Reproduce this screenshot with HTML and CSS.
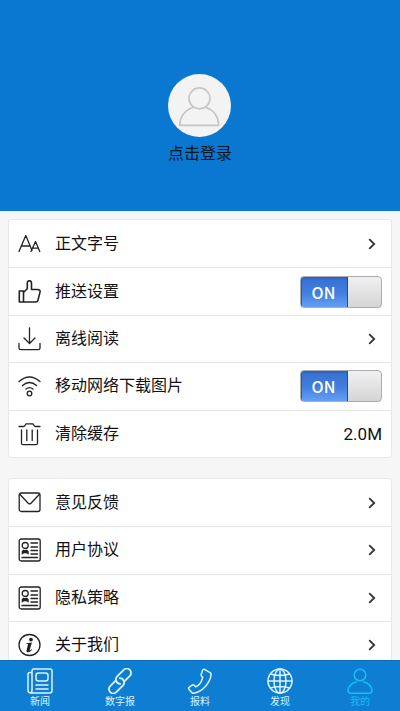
FILE: index.html
```html
<!DOCTYPE html>
<html lang="zh-CN">
<head>
<meta charset="utf-8">
<meta name="viewport" content="width=device-width, initial-scale=1">
<title>我的</title>
<link rel="stylesheet" href="styles.css">
</head>
<body>
<svg class="defs" aria-hidden="true">
  <symbol id="chevron" viewBox="0 0 8 12"><path d="M1.200 1.200 6.200 6 1.200 10.800"/></symbol>
  <symbol id="document" viewBox="0 0 24 24">
    <rect x="1.200" y="1" width="21" height="22" rx="2"/>
    <circle cx="7.200" cy="7.500" r="3"/>
    <path d="M13 5h6.500M13 9h6.500M13 12.500h6.500M13 16h6.500M4 19.500h15.500"/>
    <path class="solid dot" d="M3.700 16.800v-3.600l1.800-1.700q1.700 1 3.400 0l1.800 1.700v3.600l-2.300-1.500h-2.400z"/>
  </symbol>
</svg>

<main class="content">
  <header class="profile">
    <a class="login" href="#login">
      <svg class="avatar" viewBox="0 0 62 62" aria-hidden="true">
        <circle class="avatar-bg" cx="31" cy="31" r="31"/>
        <circle cx="31" cy="24" r="10.300"/>
        <path d="M25 32.800C17 35.500 12 42 11.500 50.500h38.500C49.500 42 45 35.500 37 32.800"/>
      </svg>
      <span>点击登录</span>
    </a>
  </header>

  <div class="cards">
    <section class="card card-settings">
      <a class="row" href="#font">
        <svg class="icon" viewBox="0 0 24 24" aria-hidden="true"><path d="M1 19.500 7.800 3.500 14 18.500M3.600 14h8.400M13 19.500l4.500-10 4.300 10M14.500 16.200h5.800"/></svg>
        <span class="label">正文字号</span>
        <svg class="chevron" aria-hidden="true"><use href="#chevron"/></svg>
      </a>
      <div class="row">
        <svg class="icon icon-bold" viewBox="0 0 24 24" aria-hidden="true"><path d="M1.300 11h4.200v11H1.300zM5.500 12.500l3.800-3.700V3c0-3 4.200-3 4.200.2v6.300h6.200c1.900 0 2.700 1 2.300 2.600l-2 8c-.3 1.300-1 1.900-2.200 1.900H5.500"/></svg>
        <label class="label" for="push">推送设置</label>
        <span class="switch"><input type="checkbox" id="push" checked><span class="switch-text" aria-hidden="true">ON</span></span>
      </div>
      <a class="row" href="#offline">
        <svg class="icon" viewBox="0 0 24 24" aria-hidden="true"><path d="M11.500 1v15M6 11l5.500 5.500L17 11M1 16.500V21q0 1.700 1.700 1.700h17.600q1.700 0 1.700-1.700v-4.500"/></svg>
        <span class="label">离线阅读</span>
        <svg class="chevron" aria-hidden="true"><use href="#chevron"/></svg>
      </a>
      <div class="row">
        <svg class="icon" viewBox="0 0 24 24" aria-hidden="true"><path d="M1 7.500q10.500-9 21 0M4.500 11.500q7-6 14 0M8 15q3.500-2.800 7 0"/><circle cx="11.500" cy="19.500" r="2.300"/></svg>
        <label class="label" for="images">移动网络下载图片</label>
        <span class="switch"><input type="checkbox" id="images" checked><span class="switch-text" aria-hidden="true">ON</span></span>
      </div>
      <a class="row" href="#cache">
        <svg class="icon" viewBox="0 0 24 24" aria-hidden="true"><path d="M1 4.500h4.500q1 0 1.500-1l1-1.700h7l1 1.700q.5 1 1.500 1H22M3.500 8v13.200q0 1.500 1.500 1.500h13q1.500 0 1.500-1.500V8M8.800 8v10.500M14.200 8v10.500"/></svg>
        <span class="label">清除缓存</span>
        <span class="value">2.0M</span>
      </a>
    </section>

    <section class="card card-about">
      <a class="row" href="#feedback">
        <svg class="icon" viewBox="0 0 24 24" aria-hidden="true"><rect x="1.200" y="2" width="20.800" height="18.500" rx="2"/><path d="M2 3.500l8.200 8.700q1.400 1.300 2.800 0L21.200 3.500"/></svg>
        <span class="label">意见反馈</span>
        <svg class="chevron" aria-hidden="true"><use href="#chevron"/></svg>
      </a>
      <a class="row" href="#agreement">
        <svg class="icon" aria-hidden="true"><use href="#document"/></svg>
        <span class="label">用户协议</span>
        <svg class="chevron" aria-hidden="true"><use href="#chevron"/></svg>
      </a>
      <a class="row" href="#privacy">
        <svg class="icon" aria-hidden="true"><use href="#document"/></svg>
        <span class="label">隐私策略</span>
        <svg class="chevron" aria-hidden="true"><use href="#chevron"/></svg>
      </a>
      <a class="row" href="#about">
        <svg class="icon" viewBox="0 0 24 24" aria-hidden="true"><circle cx="11.500" cy="12" r="10.500"/><circle class="solid dot" cx="13" cy="6.600" r="1.900"/><path class="solid dot" d="M8.200 10.200l5.700-.7-2.200 7.500c-.2.900.5.700 1.700-.7l.6.400c-2.700 3.700-6.200 3.300-5.400.2l1.300-5.200c.2-.8-.4-.9-1.700-.9z"/></svg>
        <span class="label">关于我们</span>
        <svg class="chevron" aria-hidden="true"><use href="#chevron"/></svg>
      </a>
    </section>
  </div>
</main>

<nav class="tabs">
  <a class="tab" href="#news">
    <svg viewBox="0 0 26 26" aria-hidden="true"><path d="M5 4.500H3q-2 0-2 2V22q0 3 3 3h18.500q2.500 0 2.500-2.500V3q0-2-2-2H7Q5 1 5 3v19q0 3-2 3"/><rect x="9" y="5" width="12" height="8" rx="2.500"/><path d="M9 17h12M9 21h12"/></svg>
    <span>新闻</span>
  </a>
  <a class="tab" href="#epaper">
    <svg viewBox="0 0 26 26" aria-hidden="true">
      <g class="link" transform="translate(13 13) rotate(-45)">
        <path id="link-half" d="M3.500 3.400H10.500a4.300 4.300 0 0 0 0-8.600H1.200a4.300 4.300 0 0 0-3 7.400"/>
        <use href="#link-half" transform="rotate(180)"/>
      </g>
    </svg>
    <span>数字报</span>
  </a>
  <a class="tab" href="#report">
    <svg viewBox="0 0 26 26" aria-hidden="true"><path d="M17.500 1.400l5.600 3.300q1.100.8 1 2C23.200 15 15 24.300 6.500 25.200q-1.200.1-2-.9L2 21.200q-.9-1.300.4-2.200l2.900-1.900q1.300-.7 2.200.4l1.300 1.400c3.500-1.700 6-5.300 6.900-9.500l-1-1q-.8-.8-.5-1.900l1.300-4q.6-1.700 2-1.100z"/></svg>
    <span>报料</span>
  </a>
  <a class="tab" href="#discover">
    <svg viewBox="0 0 26 26" aria-hidden="true"><circle cx="13" cy="13" r="12"/><ellipse cx="13" cy="13" rx="6" ry="12"/><path d="M13 1v24M1 13h24M3.500 6q9.500 3 19 0M3.500 20q9.500-3 19 0"/></svg>
    <span>发现</span>
  </a>
  <a class="tab tab-active" href="#me" aria-current="page">
    <svg viewBox="0 0 26 26" aria-hidden="true"><circle cx="13" cy="7" r="5.800"/><path d="M9.500 14C4.500 15 1 18.500 1 22.300q0 3 3 3h18q3 0 3-3c0-3.800-3.500-7.300-8.500-8.300"/></svg>
    <span>我的</span>
  </a>
</nav>
</body>
</html>
```
FILE: styles.css
```css
* {
  box-sizing: border-box;
}

body {
  margin: 0;
  height: 100vh;
  display: flex;
  flex-direction: column;
  background: #f6f6f6;
  color: #111;
  font: 16px/24px Roboto, "Noto Sans CJK SC", sans-serif;
}

a {
  color: inherit;
  text-decoration: none;
}

svg {
  fill: none;
  stroke: currentColor;
  stroke-linecap: round;
  stroke-linejoin: round;
}

.defs {
  position: absolute;
  width: 0;
  height: 0;
}

.solid {
  fill: currentColor;
}

.dot {
  stroke: none;
}

.content {
  flex: 1;
  min-height: 0;
  overflow-y: auto;
  scrollbar-width: none;
}

.profile {
  display: flex;
  justify-content: center;
  padding: 74px 16px 45px;
  background: #0a78d1;
}

.login {
  display: flex;
  flex-direction: column;
  align-items: center;
  gap: 5px;
  color: #0b1520;
}

.avatar {
  width: 63px;
  height: 63px;
  stroke: #c6c6c6;
  stroke-width: 1.6;
}

.avatar-bg {
  fill: #f3f3f3;
  stroke: none;
}

.cards {
  display: grid;
  gap: 20px;
  padding: 8px;
}

.card {
  display: grid;
  grid-auto-rows: 1fr;
  background: #fff;
  border: 1px solid #e9e9e9;
  border-radius: 3px;
}

.card-settings {
  min-height: 239px;
}

.card-about {
  min-height: 191px;
}

.row {
  display: flex;
  align-items: center;
  gap: 13px;
  padding: 0 9px;
}

.row + .row {
  border-top: 1px solid #e4e4e4;
}

.icon {
  width: 24px;
  height: 24px;
  color: #222;
  stroke-width: 1.3;
}

.icon-bold {
  stroke-width: 1.6;
}

.label {
  flex: 1;
}

.chevron {
  width: 8px;
  height: 12px;
  margin-right: 6px;
  color: #333;
  stroke-width: 1.8;
  stroke-linecap: butt;
  stroke-linejoin: miter;
}

.value {
  font-size: 17px;
}

.switch {
  position: relative;
  display: flex;
}

.switch input {
  appearance: none;
  width: 82px;
  height: 32px;
  margin: 0;
  border: 1px solid #a9adb3;
  border-radius: 4px;
  background: linear-gradient(90deg, #2459ae 0 1px, transparent 1px 46px, #1c4d9e 46px 47px, transparent 47px), linear-gradient(#2760b9 0, #3873d3 10%, #3f7ddd 50%, #65a0f0 100%) 0 0 / 47px 100% no-repeat, linear-gradient(#f0f0f0, #d5d5d5);
}

.switch-text {
  position: absolute;
  inset: 0 35px 0 0;
  display: grid;
  place-items: center;
  color: #fff;
  font: 500 16px/20px "Noto Sans CJK SC", sans-serif;
  pointer-events: none;
}

.switch input:not(:checked) {
  background: linear-gradient(#f0f0f0, #d5d5d5);
}

.tabs {
  display: grid;
  grid-template-columns: repeat(5, 1fr);
  padding: 7px 0 2px;
  background: #0d7ed2;
  border-top: 1px solid #0a6dbb;
}

.tab {
  display: flex;
  flex-direction: column;
  align-items: center;
  color: #dcf3ff;
  font-size: 10px;
  line-height: 15px;
}

.tab svg {
  width: 26px;
  height: 26px;
  stroke-width: 1.5;
}

.tab .link {
  stroke-width: 1.8;
}

.tab-active {
  color: #18bdf2;
}
```
